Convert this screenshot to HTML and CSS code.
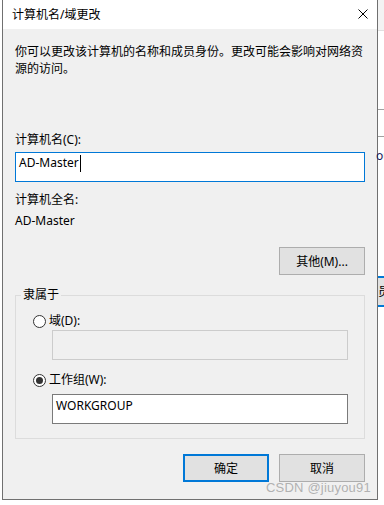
FILE: index.html
```html
<!DOCTYPE html>
<html lang="zh-CN">
<head>
    <meta charset="UTF-8">
    <meta name="viewport" content="width=device-width, initial-scale=1.0">
    <title>计算机名/域更改</title>
    <link rel="stylesheet" href="styles.css">
</head>
<body>
    <div class="screen">
        <div class="dialog">
            <div class="titlebar">
                <span class="title">计算机名/域更改</span>
                <svg class="close" width="10" height="10" viewBox="0 0 10 10">
                    <path d="M0.5 0.5 L9.5 9.5 M9.5 0.5 L0.5 9.5" stroke="#000" stroke-width="1" fill="none"/>
                </svg>
            </div>
            <div class="content">
                <p class="intro">你可以更改该计算机的名称和成员身份。更改可能会影响对网络资<br>源的访问。</p>

                <div class="label name-label">计算机名(C):</div>
                <div class="textbox focused">AD-Master<span class="caret"></span></div>

                <div class="label full-label">计算机全名:</div>
                <div class="value">AD-Master</div>

                <div class="more-row">
                    <button class="btn">其他(M)...</button>
                </div>

                <!-- member of -->
                <fieldset class="group">
                    <legend>隶属于</legend>
                    <div class="radio-row first">
                        <span class="radio"></span>域(D):
                    </div>
                    <div class="textbox disabled domain-box"></div>
                    <div class="radio-row second">
                        <span class="radio checked"></span>工作组(W):
                    </div>
                    <div class="textbox work-box">WORKGROUP</div>
                </fieldset>

                <div class="actions">
                    <button class="btn default">确定</button>
                    <button class="btn">取消</button>
                </div>
            </div>
        </div>

        <!-- window behind the dialog -->
        <div class="behind">
            <div class="behind-top"></div>
            <div class="behind-line line-a"></div>
            <div class="behind-line line-b"></div>
            <div class="behind-text">ou</div>
            <div class="behind-btn">员</div>
        </div>
    </div>

    <div class="watermark">CSDN @jiuyou91</div>
</body>
</html>
```

FILE: styles.css
```css
* {
    margin: 0;
    padding: 0;
    box-sizing: border-box;
}

body {
    font-family: "Noto Sans", "Noto Sans CJK SC", sans-serif;
    font-size: 12px;
    color: #000;
    background-color: #fff;
    width: 384px;
    height: 505px;
    overflow: hidden;
    position: relative;
}

.screen {
    display: flex;
    padding-left: 2px;
}

.dialog {
    width: 377px;
    height: 500px;
    background-color: #f0f0f0;
    border-left: 1px solid #707070;
    border-right: 1px solid #707070;
    border-bottom: 1px solid #707070;
}

.titlebar {
    height: 29px;
    background-color: #fff;
    display: flex;
    align-items: center;
    justify-content: space-between;
    padding-left: 9px;
    padding-right: 9px;
}

.title {
    line-height: 16px;
}

.close {
    display: block;
    margin-top: -1px;
}

.content {
    padding: 14px 12px 0 12px;
}

.intro {
    line-height: 17px;
    white-space: nowrap;
}

.label, .value {
    line-height: 16px;
}

.name-label {
    margin-top: 55px;
}

.full-label {
    margin-top: 10px;
}

.value {
    margin-top: 5px;
}

.textbox {
    height: 30px;
    background-color: #fff;
    border: 1px solid #7a7a7a;
    line-height: 16px;
    padding: 2px 3px 0 3px;
}

.textbox.focused {
    margin-top: 4px;
    border-color: #0078d7;
    width: 350px;
    display: flex;
    align-items: flex-start;
}

.caret {
    display: inline-block;
    width: 1px;
    height: 17px;
    background-color: #000;
    margin-left: 1px;
    margin-top: 0;
}

.textbox.disabled {
    background-color: #f0f0f0;
    border-color: #cccccc;
}

.more-row {
    display: flex;
    justify-content: flex-end;
    margin-top: 18px;
}

.btn {
    width: 86px;
    height: 28px;
    font-family: inherit;
    font-size: 12px;
    color: #000;
    background-color: #e1e1e1;
    border: 1px solid #adadad;
    cursor: pointer;
}

.btn.default {
    border: 2px solid #0078d7;
}

.group {
    margin-top: 14px;
    border: 1px solid #dcdcdc;
    padding: 0 0 14px 0;
    width: 350px;
}

.group legend {
    margin-left: 5px;
    padding: 0 2px;
    line-height: 12px;
}

.radio-row {
    display: flex;
    align-items: center;
    line-height: 16px;
    padding-left: 17px;
}

.radio-row.first {
    margin-top: 12px;
}

.radio-row.second {
    margin-top: 12px;
}

.radio {
    width: 13px;
    height: 13px;
    border: 1px solid #333;
    border-radius: 50%;
    background-color: #fff;
    margin-right: 3px;
    display: flex;
    align-items: center;
    justify-content: center;
}

.radio.checked::after {
    content: "";
    width: 7px;
    height: 7px;
    border-radius: 50%;
    background-color: #333;
}

.domain-box, .work-box {
    width: 296px;
    margin-left: 36px;
}

.domain-box {
    margin-top: 1px;
}

.work-box {
    margin-top: 6px;
    padding-top: 3px;
}

.actions {
    display: flex;
    justify-content: flex-end;
    gap: 10px;
    margin-top: 15px;
}

.behind {
    flex: 1;
    display: flex;
    flex-direction: column;
    background-color: #fff;
}

.behind-top {
    height: 31px;
    background-color: #f3f3f3;
    border-bottom: 1px solid #e0e0e0;
}

.behind-line {
    height: 1px;
    background-color: #a0a0a0;
}

.line-a {
    margin-top: 78px;
}

.line-b {
    margin-top: 26px;
}

.behind-text {
    margin-top: 12px;
    line-height: 14px;
    color: #1a1a60;
    white-space: nowrap;
    overflow: hidden;
    margin-left: -2px;
}

.behind-btn {
    margin-top: 113px;
    height: 31px;
    border-top: 2px solid #0078d7;
    border-bottom: 2px solid #0078d7;
    background-color: #e1e1e1;
    line-height: 27px;
    white-space: nowrap;
    overflow: hidden;
}

.watermark {
    position: absolute;
    left: 266px;
    top: 480px;
    font-family: "Liberation Sans", Arial, sans-serif;
    font-size: 13px;
    line-height: 15px;
    color: rgba(160, 160, 160, 0.8);
    letter-spacing: 0.2px;
}
```
